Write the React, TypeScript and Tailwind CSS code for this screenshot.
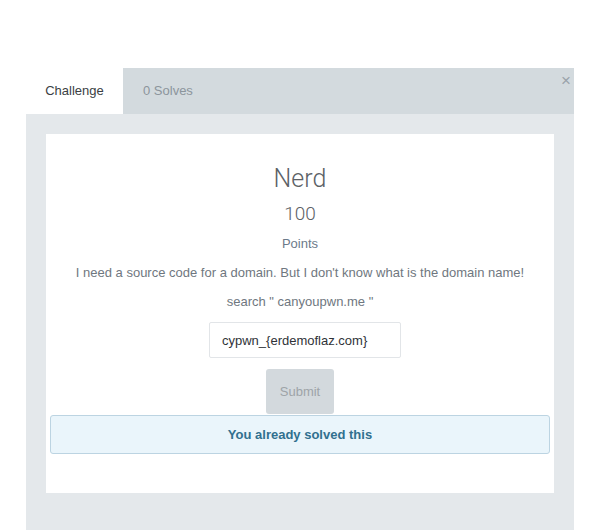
import React from "react";

function App() {
  return (
    <div className="h-[530px] w-[599px] bg-white pt-[68px] pl-[26px] font-['Liberation_Sans',Arial,sans-serif]">
      <div className="relative w-[548px]">
        {/* tabs */}
        <div className="flex h-[46px] bg-[#d3dade]">
          <div className="flex w-[97px] items-center justify-center bg-white text-[13px] text-[#3b3f44]">
            Challenge
          </div>
          <div className="flex items-center pl-[20px] text-[13px] text-[#8c959c]">
            0 Solves
          </div>
        </div>
        <button className="absolute right-[3px] top-[4px] text-[17px] leading-none text-[#9aa3aa]">
          ×
        </button>

        <div className="h-[416px] bg-[#e4e8eb] px-[20px] pt-[20px]">
          <div className="flex h-[359px] flex-col items-center bg-white px-[4px]">
            <h3 className="mt-[30px] h-[30px] font-['Roboto',sans-serif] text-[25px] font-light leading-[30px] text-[#5c6166]">
              Nerd
            </h3>
            <div className="mt-[8px] h-[24px] font-['Roboto',sans-serif] text-[19px] font-light leading-[24px] text-[#5c6166]">
              100
            </div>
            <div className="mt-[8px] h-[20px] text-[13px] leading-[20px] text-[#6c7a8a]">
              Points
            </div>
            <p className="mt-[9px] h-[20px] text-[13px] leading-[20px] text-[#6f7780]">
              I need a source code for a domain. But I don't know what is the domain name!
            </p>
            <p className="mt-[9px] h-[20px] text-[13px] leading-[20px] text-[#6f7780]">
              search " canyoupwn.me "
            </p>
            <input
              readOnly
              value="cypwn_{erdemoflaz.com}"
              className="ml-[10px] mt-[10px] h-[36px] w-[192px] rounded-[2px] border border-[#e2e5e8] px-[12px] text-[13px] text-[#2f3338] outline-none"
            />
            <button className="mt-[11px] h-[45px] w-[68px] rounded-[3px] bg-[#d3d9dd] text-[13px] text-[#9ea4a8]">
              Submit
            </button>
            <div className="mt-[1px] flex h-[39px] w-full items-center justify-center rounded-[3px] border border-[#bcd4e2] bg-[#eaf5fb] text-[13px] font-bold text-[#31708f]">
              You already solved this
            </div>
          </div>
        </div>
      </div>
    </div>
  );
}

export default App;
